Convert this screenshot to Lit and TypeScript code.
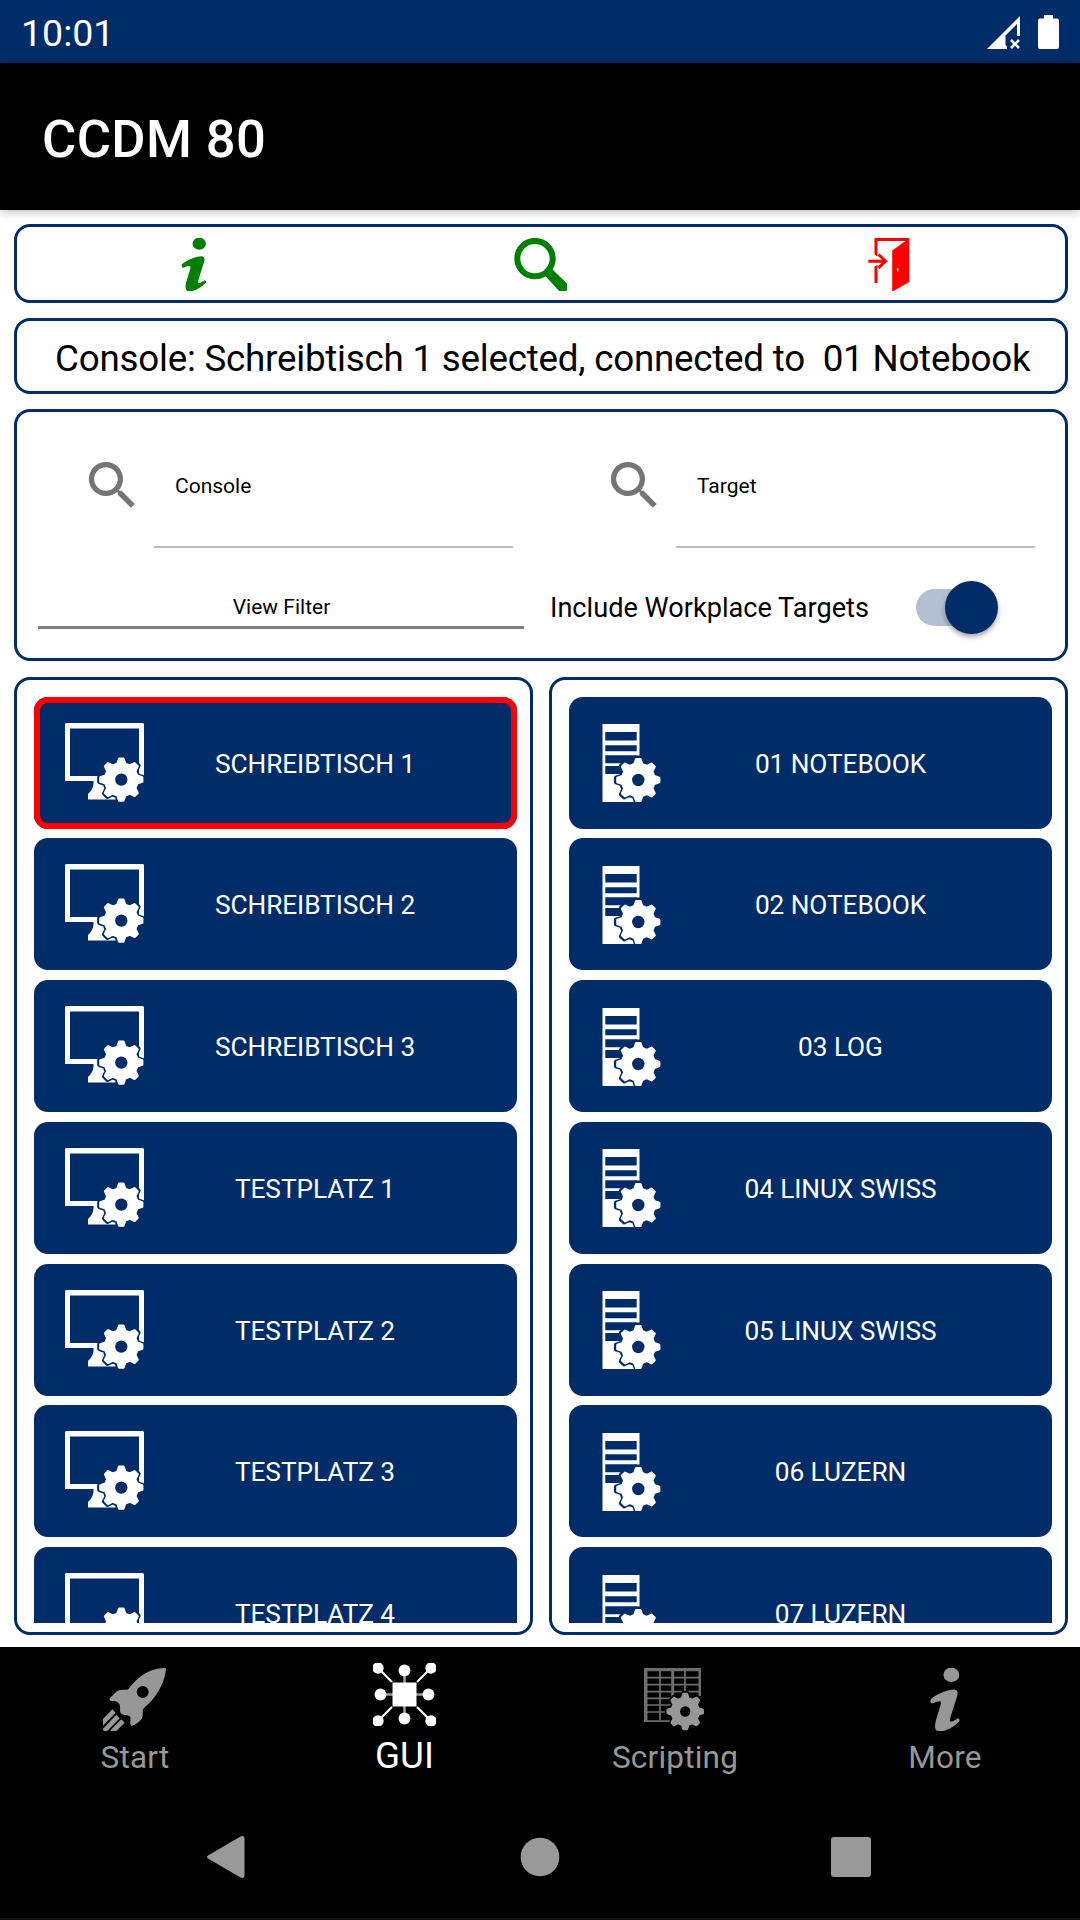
import { LitElement, html, css, svg } from "lit";
import { customElement, property } from "lit/decorators.js";

const NAVY = "#002d69";

/* Builds the outline of an eight-toothed gear; a hole radius of 0 leaves it solid. */
function gearPath(cx: number, cy: number, outer: number, inner: number, hole = 0): string {
  const pts: string[] = [];
  const step = Math.PI / 4;
  for (let i = 0; i < 8; i++) {
    const a = i * step - Math.PI / 2;
    const corners: [number, number][] = [
      [-0.24, inner],
      [-0.1, outer],
      [0.1, outer],
      [0.24, inner],
    ];
    for (const [d, r] of corners) {
      pts.push(`${(cx + r * Math.cos(a + d)).toFixed(2)} ${(cy + r * Math.sin(a + d)).toFixed(2)}`);
    }
  }
  const rim = `M${pts.join("L")}Z`;
  return hole
    ? rim + `M${cx - hole} ${cy}a${hole} ${hole} 0 1 0 ${2 * hole} 0a${hole} ${hole} 0 1 0 ${-2 * hole} 0Z`
    : rim;
}

const icons = {
  info: svg`<svg viewBox="0 0 63 63"><g transform="translate(-2.6 0) scale(1.15 1)">
    <ellipse cx="35.600" cy="6.800" rx="6.900" ry="7.200"/>
    <path d="M38.300 21.600C33 21.800 24 25 17.600 31.200c-.4 2 0 3.800 1.200 4.200 2.800-1 4.700-2.300 7-2.200 1 .3.700 2.200.3 4.200L22 53c-.9 5.500-1 9 1.800 10.300 5.200 1 13.200-3.300 18.700-10 .5-1.400-.2-3.200-1.600-2.900-2.700 1.900-5.700 4-6.500 2.900-.4-1 .3-3.200.7-5l5.600-20.300c.7-3.300.6-5.800-2.400-6.400z"/></g></svg>`,
  search: svg`<svg viewBox="0 0 53 53">
    <circle cx="21" cy="20.600" r="17.700" fill="none" stroke="currentColor" stroke-width="6"/>
    <path d="M31 37.500L38 31 52.500 45q2 3.500 0 8-4.500 1-7.500 0z"/></svg>`,
  door: svg`<svg viewBox="0 0 53 53">
    <path d="M12.500 0h34.800v44L31.500 53h-1.300V12.500L43.500 3H15.500v15.500l-3-2z"/>
    <path d="M12.500 28.500l3-1.500v18h-3z"/>
    <path d="M6.300 23.200h17M16.500 16.500l7 6.700-7 6.700" fill="none" stroke="currentColor" stroke-width="3"/>
    <ellipse cx="35.700" cy="31.800" rx=".9" ry="2" fill="#fff"/></svg>`,
  lens: svg`<svg viewBox="0 0 24 24"><path d="M15.500 14h-.79l-.28-.27A6.471 6.471 0 0 0 16 9.500 6.500 6.500 0 1 0 9.500 16c1.610 0 3.090-.59 4.230-1.570l.27.28v.79l5 4.990L20.490 19l-4.990-5zm-6 0C7.010 14 5 11.990 5 9.500S7.010 5 9.500 5 14 7.010 14 9.500 11.990 14 9.500 14z"/></svg>`,
  console: svg`<svg viewBox="0 0 79 79">
    <path d="M1 0h77l1 1v57H0V1zM5 5.500v47.500h69V5.500z" fill-rule="evenodd"/>
    <path d="M28.500 57h22v19.500H23v-5.500c3.500-3 6-7 5.500-14z"/>
    <path d="${gearPath(56.300, 56.600, 22, 17)}" fill="${NAVY}" stroke="${NAVY}" stroke-width="4.500" stroke-linejoin="round"/>
    <path d="${gearPath(56.300, 56.600, 21, 16.300, 7.400)}" fill-rule="evenodd" stroke="currentColor" stroke-width="2.400" stroke-linejoin="round"/></svg>`,
  target: svg`<svg viewBox="0 0 79 79">
    <path d="M10.500 1h37v78h-37zM13.300 9v8.500h31.400V9zM13.300 22.300v6h31.400v-6zM13.300 32.300v8h31.400v-8zM13.300 43v8h31.400v-8z" fill-rule="evenodd"/>
    <path d="${gearPath(46.300, 57, 22.500, 17.500)}" fill="${NAVY}" stroke="${NAVY}" stroke-width="4" stroke-linejoin="round"/>
    <path d="${gearPath(46.300, 57, 21, 16.300, 7.400)}" fill-rule="evenodd" stroke="currentColor" stroke-width="2.400" stroke-linejoin="round"/></svg>`,
  rocket: svg`<svg viewBox="0 0 63 63">
    <path fill-rule="evenodd" d="M63 0C48 0 37 6 25 21.500 20 22 16 21.500 13.500 23.500L6.500 30.500q0 2 2 2.500c4 0 6 0 8 3.500 1.500 3-.5 6 1.500 9 3 2.500 6.500 1 9 3 1.500 3-1 7 1.500 9.500 5-1.500 8-4.500 10.500-7.500 1.500-4 0-7 1.500-10C51 32 62 17 63 0zM39.700 18a6 6 0 1 1 0 12 6 6 0 0 1 0-12z"/>
    <path d="M11 43L-2 56.500M15 48.500L1 63M20 53L9 64" fill="none" stroke="currentColor" stroke-width="4.700"/></svg>`,
  network: svg`<svg viewBox="0 0 63 63">
    <path d="M19.500 19.500h24v24h-24z"/>
    <path d="M5 5l14 14M58 5L44 19M5 58l14-14M58 58L44 44" fill="none" stroke="currentColor" stroke-width="2.200"/>
    <path d="M31.500 8v12M31.500 55V43M8 31.500h12M55 31.500H43" fill="none" stroke="currentColor" stroke-width="2.600" opacity=".6"/>
    <circle cx="5" cy="5" r="5.700"/><circle cx="58" cy="5" r="5.700"/><circle cx="5" cy="58" r="5.700"/><circle cx="58" cy="58" r="5.700"/>
    <circle cx="31.500" cy="7.500" r="5.900"/><circle cx="31.500" cy="55.500" r="5.900"/><circle cx="7.500" cy="31.500" r="5.900"/><circle cx="55.500" cy="31.500" r="5.900"/></svg>`,
  sheet: svg`<svg viewBox="0 0 63 63">
    <g opacity=".72"><path d="M1 0h57v54H1zM4.500 3.300v49H55.500V3.300z" fill-rule="evenodd"/>
    <path d="M3 9.700h54M3 16.700h54M3 23.700h54M3 30.300h54M3 37h54M3 44h54M17 3v49M42 3v49" fill="none" stroke="currentColor" stroke-width="1.700"/>
    <path d="M29.700 3v49" fill="none" stroke="currentColor" stroke-width="3"/></g>
    <path d="${gearPath(42.200, 43.500, 18.500, 14)}" fill="#000" stroke="#000" stroke-width="4"/>
    <path d="M55 28h8v26h-8z" fill="#000"/>
    <path d="${gearPath(42.200, 43.500, 17.700, 13.600, 6.300)}" fill-rule="evenodd" stroke="currentColor" stroke-width="2.200" stroke-linejoin="round"/></svg>`,
};

const consoles = [
  "Schreibtisch 1",
  "Schreibtisch 2",
  "Schreibtisch 3",
  "Testplatz 1",
  "Testplatz 2",
  "Testplatz 3",
  "Testplatz 4",
];
const targets = [
  "01 Notebook",
  "02 Notebook",
  "03 Log",
  "04 Linux Swiss",
  "05 Linux Swiss",
  "06 Luzern",
  "07 Luzern",
];
const tabs: { label: string; icon: keyof typeof icons }[] = [
  { label: "Start", icon: "rocket" },
  { label: "GUI", icon: "network" },
  { label: "Scripting", icon: "sheet" },
  { label: "More", icon: "info" },
];

@customElement("device-list")
class DeviceList extends LitElement {
  @property({ attribute: false }) items: string[] = [];
  @property() kind: "console" | "target" = "console";
  @property() selected = "";

  static styles = css`
    :host {
      display: block;
      box-sizing: border-box;
      border: 3px solid #002d69;
      border-radius: 16px;
      padding: 16.500px 13px 9px 17px;
    }
    .scroller {
      height: 100%;
      overflow: hidden;
      display: flex;
      flex-direction: column;
      gap: 9.750px;
    }
    .device {
      flex: none;
      display: grid;
      align-items: center;
      width: 483px;
      height: 132px;
      box-sizing: border-box;
      padding: 0;
      border: 0;
      border-radius: 14px;
      background: #002d69;
      color: #fff;
      font: 400 26.250px Roboto, sans-serif;
      letter-spacing: -0.070px;
      text-transform: uppercase;
    }
    .icon,
    .label {
      grid-area: 1 / 1;
    }
    .icon {
      width: 79px;
      height: 79px;
      margin: 0 0 1px 31px;
    }
    .icon svg {
      display: block;
      fill: currentColor;
    }
    .label {
      padding: 2px 0 0 79px;
      text-align: center;
    }
    .target .icon {
      margin: 0 0 0 23px;
    }
    .target .label {
      padding-left: 60px;
    }
    .selected {
      box-shadow: inset 0 0 0 6px #f00;
    }
  `;

  render() {
    return html`<div class="scroller">
      ${this.items.map(
        (name) => html`<button class="device ${this.kind} ${name === this.selected ? "selected" : ""}">
          <span class="icon">${icons[this.kind]}</span>
          <span class="label">${name}</span>
        </button>`
      )}
    </div>`;
  }
}

@customElement("app-root")
class AppRoot extends LitElement {
  static styles = css`
    :host {
      display: flex;
      flex-direction: column;
      width: 1080px;
      height: 1920px;
      overflow: hidden;
      background: #fff;
      color: #000;
      font-family: Roboto, sans-serif;
    }
    svg {
      display: block;
      fill: currentColor;
    }
    .status {
      flex: none;
      height: 63px;
      box-sizing: border-box;
      padding: 2px 21px 0 21px;
      display: flex;
      align-items: center;
      background: #002d69;
      color: #fff;
      font-size: 37.500px;
    }
    .clock {
      flex: 1;
    }
    .signal {
      width: 33px;
      height: 33px;
      margin-right: 18px;
    }
    .battery {
      width: 21px;
      height: 34px;
      margin-bottom: 2px;
    }
    .title {
      flex: none;
      height: 147px;
      box-sizing: border-box;
      padding: 4px 42px 0;
      display: flex;
      align-items: center;
      background: #000;
      color: #fff;
      font-size: 52.500px;
      font-weight: 500;
      letter-spacing: 0.400px;
      box-shadow: 0 2px 10px rgba(0, 0, 0, 0.25);
    }
    .content {
      flex: none;
      height: 1437px;
      box-sizing: border-box;
      padding: 14px 12px 12px 14px;
      display: flex;
      flex-direction: column;
      gap: 15px;
    }
    .panel {
      flex: none;
      box-sizing: border-box;
      border: 3px solid #002d69;
      border-radius: 16px;
      background: #fff;
    }
    .actions {
      height: 79px;
      padding: 1px 3px 0;
      display: grid;
      grid-template-columns: repeat(3, 1fr);
      align-items: center;
      justify-items: center;
    }
    .action {
      width: 53px;
      height: 53px;
      color: #008000;
    }
    .exit {
      color: #f00;
    }
    .message {
      height: 76px;
      display: flex;
      align-items: center;
      padding: 5px 0 0 38px;
      font-size: 36.750px;
      letter-spacing: -0.230px;
      white-space: pre;
    }
    .filters {
      height: 252px;
      display: grid;
      grid-template-columns: 522px 522px;
      grid-template-rows: 136px 1fr;
    }
    .search {
      display: flex;
      padding-left: 64px;
    }
    .lens {
      width: 63px;
      height: 63px;
      margin-top: 42px;
      color: #757575;
    }
    .field {
      box-sizing: border-box;
      width: 359px;
      height: 136px;
      margin-left: 10px;
      padding: 61px 0 0 21px;
      border-bottom: 2px solid #bebebe;
      font-size: 21px;
      line-height: 26px;
    }
    .view {
      box-sizing: border-box;
      width: 486px;
      height: 81px;
      margin-left: 21px;
      padding: 46px 0 0 1px;
      border-bottom: 3px solid #808080;
      text-align: center;
      font-size: 21px;
      line-height: 26px;
    }
    .include {
      display: flex;
      align-items: flex-start;
      padding: 33px 0 0 11px;
      font-size: 27.150px;
    }
    .include-label {
      width: 366px;
      padding-top: 11px;
      line-height: 32px;
    }
    .track {
      width: 74px;
      height: 37px;
      margin-top: 8px;
      border-radius: 19px;
      background: #b2c0d2;
      display: flex;
      align-items: center;
    }
    .thumb {
      flex: none;
      width: 53px;
      height: 53px;
      margin-left: 29px;
      border-radius: 50%;
      background: #002d69;
      box-shadow: 0 3px 5px rgba(0, 0, 0, 0.35);
    }
    .lists {
      flex: none;
      height: 958px;
      margin-top: 1px;
      display: flex;
      justify-content: space-between;
    }
    .lists device-list {
      width: 519px;
    }
    .tabs {
      flex: none;
      height: 153px;
      display: grid;
      grid-template-columns: repeat(4, 1fr);
      background: #000;
      color: #979797;
    }
    .tab {
      display: flex;
      flex-direction: column;
      align-items: center;
      padding: 21px 0 0;
      font-size: 31.500px;
      line-height: 38px;
      letter-spacing: 0.200px;
    }
    .tab-icon {
      width: 63px;
      height: 63px;
      margin: 0 1px 8px 0;
    }
    .active {
      padding: 16px 1px 0 0;
      color: #fff;
      font-size: 36.750px;
      line-height: 44px;
      letter-spacing: 0;
    }
    .system {
      flex: 1;
      background: #000;
      color: #999;
      padding: 36px 209px 0 207px;
      border-bottom: 2px solid #111;
      display: flex;
      align-items: flex-start;
      justify-content: space-between;
    }
    .home {
      margin-left: 4px;
    }
  `;

  render() {
    return html`
      <div class="status">
        <span class="clock">10:01</span>
        <svg class="signal" viewBox="0 0 33 33">
          <path d="M33 0v20h-3V8L18.500 19.500V29l1.500 1.500V33H0z" />
          <path d="M24 24l8 8M32 24l-8 8" fill="none" stroke="currentColor" stroke-width="2.600" />
        </svg>
        <svg class="battery" viewBox="0 0 21 34">
          <path d="M6 0h9v3.500h4q2 0 2 2V32q0 2-2 2H2q-2 0-2-2V5.500q0-2 2-2h4z" />
        </svg>
      </div>
      <header class="title">CCDM 80</header>
      <main class="content">
        <div class="panel actions">
          <div class="action">${icons.info}</div>
          <div class="action">${icons.search}</div>
          <div class="action exit">${icons.door}</div>
        </div>
        <div class="panel message">Console: Schreibtisch 1 selected, connected to  01 Notebook</div>
        <div class="panel filters">
          ${["Console", "Target"].map(
            (name) => html`<div class="search">
              <div class="lens">${icons.lens}</div>
              <div class="field">${name}</div>
            </div>`
          )}
          <div class="view">View Filter</div>
          <div class="include">
            <span class="include-label">Include Workplace Targets</span>
            <div class="track"><div class="thumb"></div></div>
          </div>
        </div>
        <div class="lists">
          <device-list kind="console" .items=${consoles} selected="Schreibtisch 1"></device-list>
          <device-list kind="target" .items=${targets}></device-list>
        </div>
      </main>
      <nav class="tabs">
        ${tabs.map(
          (tab) => html`<div class="tab ${tab.label === "GUI" ? "active" : ""}">
            <div class="tab-icon">${icons[tab.icon]}</div>
            <span>${tab.label}</span>
          </div>`
        )}
      </nav>
      <div class="system">
        <svg width="38" height="42" viewBox="0 0 38 42">
          <path d="M1 19.500L33.500.5Q37.500-1 37.500 3v36q0 4-4 2.500L1 22.500q-2-1.500 0-3z" />
        </svg>
        <svg class="home" width="40" height="42" viewBox="0 0 40 42"><circle cx="20" cy="21" r="19.300" /></svg>
        <svg width="40" height="42" viewBox="0 0 40 42"><rect y="1" width="40" height="40" rx="3" /></svg>
      </div>
    `;
  }
}
